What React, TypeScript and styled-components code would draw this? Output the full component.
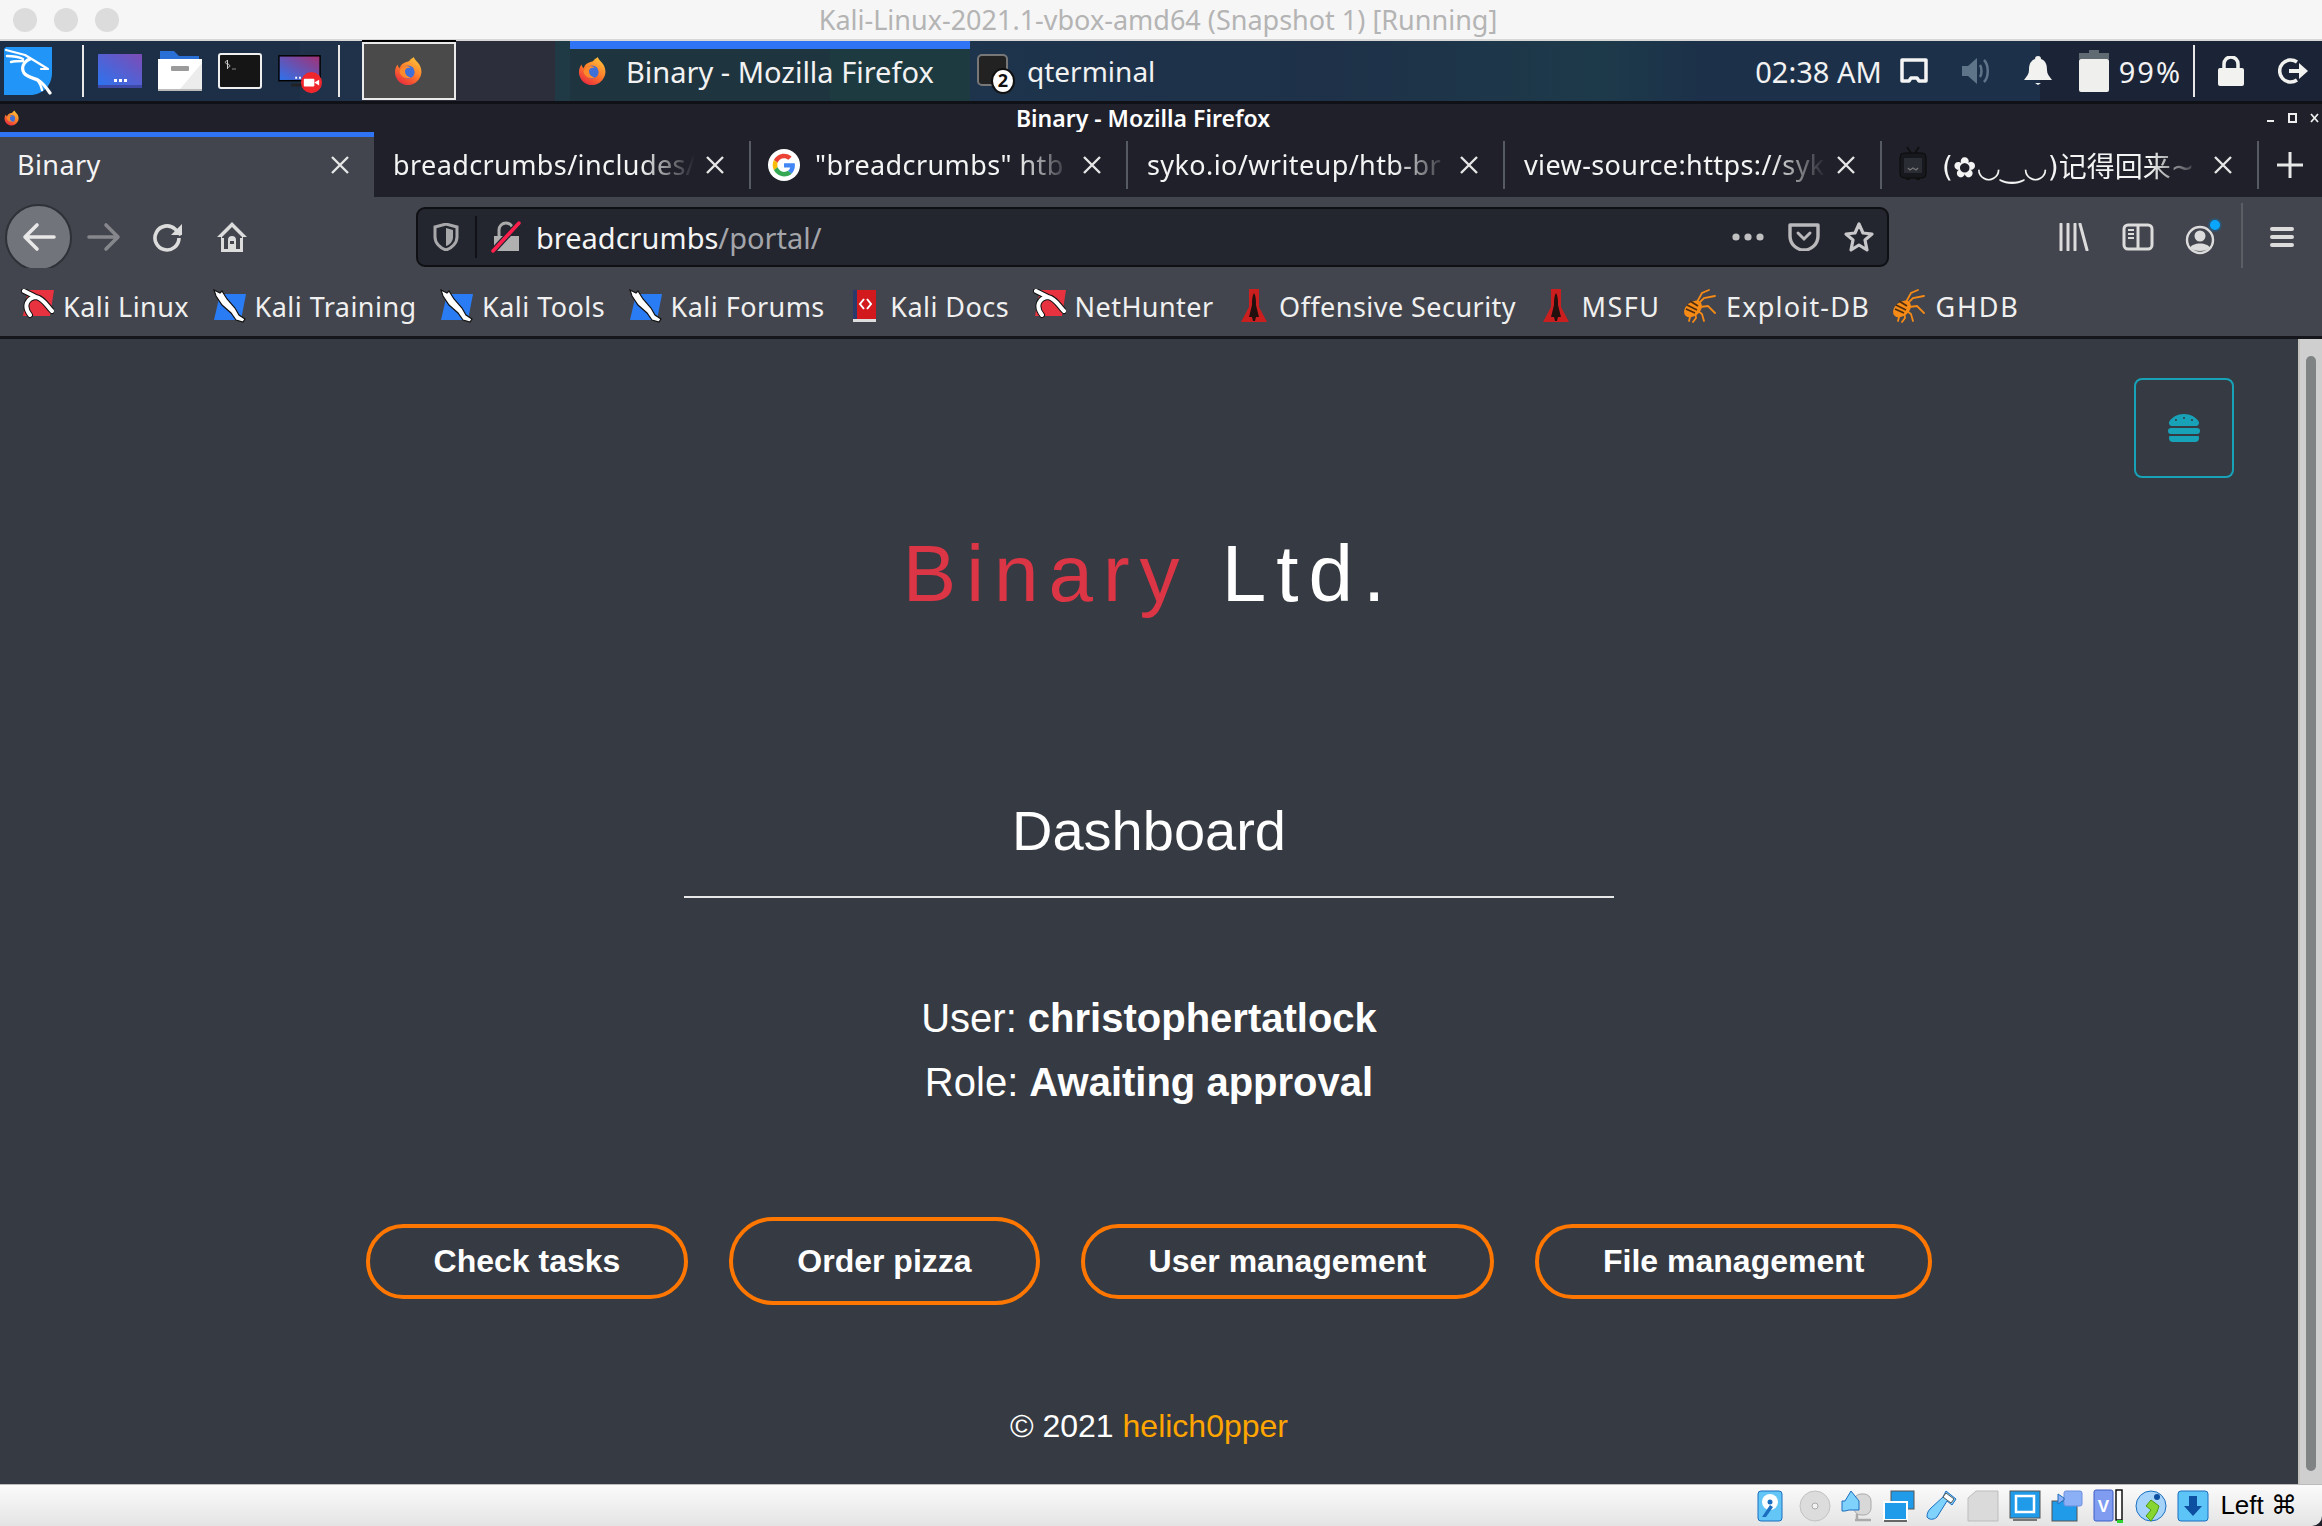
import React from 'react';
import styled, { createGlobalStyle } from 'styled-components';
import { FaHamburger } from 'react-icons/fa';

const UI_FONT = '"Noto Sans", "Noto Sans CJK SC", sans-serif';
const PAGE_FONT = '"Liberation Sans", Arial, sans-serif';

const GlobalStyle = createGlobalStyle`
  html, body {
    margin: 0;
    padding: 0;
    background: #1f2029;
    overflow: hidden;
  }
  * { box-sizing: border-box; }
`;

const Screen = styled.div`
  width: 2322px;
  height: 1526px;
  display: flex;
  flex-direction: column;
  font-family: ${UI_FONT};
  overflow: hidden;
`;

/* ---- host window title ---- */
const HostBar = styled.div`
  height: 41px;
  flex: none;
  display: flex;
  align-items: center;
  padding-left: 13px;
  background: #f6f6f6;
  border-bottom: 2px solid #d8d8d8;
`;
const Light = styled.span`
  width: 24px;
  height: 24px;
  border-radius: 50%;
  background: #dcdcdc;
  margin-right: 17px;
`;
const HostTitle = styled.div`
  flex: 1;
  text-align: center;
  font-size: 27px;
  color: #b4b4b4;
  margin-left: -142px;
  white-space: nowrap;
`;

/* ---- kali panel ---- */
const Panel = styled.div`
  height: 60px;
  flex: none;
  display: flex;
  align-items: center;
  color: #f2f2f2;
  background: linear-gradient(90deg, #1d2e47 0, #1d2e47 300px, #20324a 300px, #20324a 362px, #2c2f3b 362px, #2c2f3b 555px,
    #1f3a44 555px, #1f3a44 570px, #1e343f 570px, #1e343f 830px, #1d3a41 830px, #1d3a41 970px, #1d344c 970px,
    #1e3148 1330px, #1d3a4a 1600px, #1c3149 1700px, #1c3149 2040px, #1a2436 2040px, #1a2436 2322px);
`;
const PanelSep = styled.span<{ $ml: number }>`
  width: 2px;
  height: 52px;
  flex: none;
  margin-left: ${p => p.$ml}px;
  background: #e8e8e8;
`;
const Launcher = styled.div<{ $ml: number; $pt: number; $w?: number }>`
  width: ${p => p.$w || 44}px;
  height: 60px;
  flex: none;
  margin-left: ${p => p.$ml}px;
  padding-top: ${p => p.$pt}px;
  display: flex;
  align-items: flex-start;
`;
const ActiveLauncher = styled.div`
  width: 94px;
  height: 58px;
  flex: none;
  margin-left: 22px;
  display: flex;
  align-items: center;
  justify-content: center;
  background: #4a4a4a;
  border: 2px solid #eaeaea;
  box-shadow: 0 -2px 0 #000;
`;
const TaskActive = styled.div`
  width: 400px;
  height: 60px;
  flex: none;
  margin-left: 114px;
  display: flex;
  align-items: center;
  padding: 0 0 8px 8px;
  gap: 18px;
  border-top: 8px solid #2f74f5;
  font-size: 29px;
  white-space: nowrap;
`;
const Task = styled.div`
  display: flex;
  align-items: center;
  gap: 18px;
  margin-left: 7px;
  font-size: 28px;
  white-space: nowrap;
`;
const TaskIcon = styled.span`
  position: relative;
  width: 32px;
  height: 34px;
  display: block;
`;
const TaskBadge = styled.span`
  position: absolute;
  right: -6px;
  bottom: -6px;
  width: 24px;
  height: 26px;
  border-radius: 50%;
  border: 2px solid #111;
  background: #fff;
  color: #111;
  font-size: 18px;
  font-weight: 700;
  line-height: 21px;
  text-align: center;
`;
const Clock = styled.div`
  margin-left: auto;
  font-size: 29px;
  white-space: nowrap;
`;
const Tray = styled.div<{ $ml: number; $w: number }>`
  margin-left: ${p => p.$ml}px;
  width: ${p => p.$w}px;
  flex: none;
  display: flex;
  align-items: center;
  justify-content: center;
`;
const Percent = styled.div`
  margin-left: 10px;
  font-size: 29px;
  letter-spacing: 2px;
  white-space: nowrap;
`;

/* ---- firefox window ---- */
const WinTitle = styled.div`
  height: 31px;
  flex: none;
  display: flex;
  align-items: center;
  background: #1f2029;
  border-top: 3px solid #101116;
  padding-left: 4px;
`;
const WinTitleText = styled.div`
  flex: 1;
  text-align: center;
  font-size: 23px;
  font-weight: 600;
  color: #fff;
  white-space: nowrap;
`;
const WinControls = styled.div`
  display: flex;
  align-items: center;
  gap: 13px;
  padding-right: 3px;
`;

const TabStrip = styled.div`
  height: 65px;
  flex: none;
  display: flex;
  align-items: center;
  background: #1f2029;
`;
const Tab = styled.div<{ $active?: boolean; $w: number }>`
  width: ${p => p.$w}px;
  height: 65px;
  flex: none;
  display: flex;
  align-items: center;
  gap: 4px;
  padding: ${p => (p.$active ? '0 24px 5px 17px' : '0 24px 0 19px')};
  font-size: 27px;
  letter-spacing: 0.4px;
  color: #f4f4f4;
  white-space: nowrap;
  background: ${p => (p.$active ? '#42454d' : 'transparent')};
  border-top: ${p => (p.$active ? '5px solid #2f74f5' : '0')};
`;
const TabIcon = styled.span`
  flex: none;
  display: flex;
  margin-left: -2px;
  margin-right: 11px;
`;
const TabLabel = styled.span<{ $fade?: boolean; $kaomoji?: boolean }>`
  flex: 1;
  overflow: hidden;
  ${p => p.$fade && `
    -webkit-mask-image: linear-gradient(90deg, #000 calc(100% - 60px), transparent calc(100% - 6px));
    mask-image: linear-gradient(90deg, #000 calc(100% - 60px), transparent calc(100% - 6px));
  `}
  ${p => p.$kaomoji && `
    font-family: "DejaVu Sans", "Noto Sans CJK SC", sans-serif;
    font-size: 28px;
    letter-spacing: 0;
  `}
`;
const TabSep = styled.span`
  width: 2px;
  height: 48px;
  flex: none;
  background: #565a62;
`;
const PlusTab = styled.div`
  flex: 1;
  display: flex;
  justify-content: center;
  padding-right: 2px;
`;

const Toolbar = styled.div`
  height: 71px;
  flex: none;
  display: flex;
  align-items: center;
  background: #42454d;
  padding: 9px 0 0 5px;
`;
const NavButton = styled.div<{ $hover?: boolean }>`
  width: ${p => (p.$hover ? 67 : 64)}px;
  height: 67px;
  flex: none;
  display: flex;
  align-items: center;
  justify-content: center;
  border-radius: 50%;
  background: ${p => (p.$hover ? '#71747a' : 'transparent')};
  border: ${p => (p.$hover ? '2px solid #2f3138' : '0')};
`;
const UrlBar = styled.div`
  width: 1473px;
  height: 60px;
  flex: none;
  margin-left: 152px;
  display: flex;
  align-items: center;
  background: #23252f;
  border: 2px solid #0f1014;
  border-radius: 9px;
  padding-left: 15px;
  font-size: 29px;
`;
const UrlDivider = styled.span`
  width: 2px;
  height: 42px;
  background: #101116;
  margin: 0 14px 0 16px;
`;
const UrlHost = styled.span`
  color: #f4f4f4;
  margin-left: 15px;
`;
const UrlPath = styled.span`
  color: #a3a5aa;
`;
const UrlActions = styled.div`
  margin-left: auto;
  display: flex;
  align-items: center;
  gap: 23px;
  padding-right: 12px;
`;
const ToolSep = styled.span`
  width: 2px;
  height: 68px;
  background: #5b5e65;
  margin: 0 7px;
`;
const ToolIcons = styled.div`
  margin-left: 153px;
  display: flex;
  align-items: center;
`;

const Bookmarks = styled.div`
  height: 71px;
  flex: none;
  display: flex;
  align-items: center;
  background: #42454d;
  border-bottom: 3px solid #15161b;
  padding: 8px 0 0 21px;
`;
const Bookmark = styled.div<{ $tracking?: number }>`
  display: flex;
  align-items: center;
  gap: 9px;
  margin-right: 23.5px;
  font-size: 27px;
  letter-spacing: ${p => p.$tracking ?? 0.45}px;
  color: #f0f0f0;
  white-space: nowrap;
`;
const BookIcon = styled.span`
  width: 33px;
  height: 34px;
  flex: none;
  display: flex;
  justify-content: center;
`;

/* ---- page ---- */
const Viewport = styled.div`
  flex: 1;
  min-height: 0;
  display: flex;
  background: #363a42;
`;
const Page = styled.main`
  flex: 1;
  position: relative;
  display: flex;
  flex-direction: column;
  align-items: center;
  padding-top: 187px;
  font-family: ${PAGE_FONT};
  color: #fff;
`;
const BurgerButton = styled.div`
  position: absolute;
  top: 39px;
  right: 64px;
  width: 100px;
  height: 100px;
  display: flex;
  align-items: center;
  justify-content: center;
  border: 2px solid #17a2b8;
  border-radius: 8px;
  color: #17a2b8;
  font-size: 32px;
`;
const Brand = styled.h1`
  margin: 0;
  font-size: 80px;
  line-height: 96px;
  font-weight: 400;
  letter-spacing: 10px;
  white-space: nowrap;
  color: #fff;
`;
const BrandRed = styled.span`
  color: #dc3545;
`;
const Heading = styled.h2`
  margin: 175px 0 0;
  font-size: 56px;
  line-height: 67px;
  font-weight: 400;
`;
const Rule = styled.hr`
  width: 930px;
  height: 2px;
  margin: 32px 0 0;
  border: 0;
  background: #e8e8e8;
`;
const InfoBlock = styled.div`
  margin-top: 88px;
  text-align: center;
  font-size: 40px;
  line-height: 64px;
`;
const ButtonRow = styled.div`
  margin-top: 103px;
  display: flex;
  align-items: center;
  gap: 41px;
`;
const PillButton = styled.div<{ $tall?: boolean }>`
  height: ${p => (p.$tall ? 88 : 75)}px;
  padding: 0 64px;
  display: flex;
  align-items: center;
  border: 4px solid #ff7700;
  border-radius: 50px;
  font-size: 32px;
  font-weight: 700;
  white-space: nowrap;
`;
const Footer = styled.footer`
  margin-top: 97px;
  font-size: 32px;
  line-height: 48px;
`;
const FooterLink = styled.span`
  color: #ffa500;
`;
const ScrollTrack = styled.div`
  width: 24px;
  flex: none;
  padding: 17px 6px 0;
  background: #cfcfcf;
  border-left: 2px solid #c4c2bc;
`;
const ScrollThumb = styled.div`
  height: 1115px;
  border-radius: 6px;
  background: #7f8384;
`;

/* ---- virtualbox status ---- */
const StatusBar = styled.div`
  height: 42px;
  flex: none;
  display: flex;
  align-items: center;
  justify-content: flex-end;
  gap: 10px;
  padding-right: 25px;
  background: linear-gradient(#fbfbfb, #e4e4e4);
  border-top: 1px solid #bbb;
  border-bottom-right-radius: 10px;
`;
const StatusCell = styled.span`
  width: 32px;
  height: 34px;
  flex: none;
  display: flex;
  align-items: center;
`;
const StatusKey = styled.span`
  font-family: "Liberation Sans", "DejaVu Sans", sans-serif;
  font-size: 26px;
  color: #000;
  margin-left: 1px;
  white-space: nowrap;
`;

/* ---- drawings ---- */
const Firefox: React.FC<{ size: number }> = ({ size }) => (
  <svg width={size} height={size} viewBox="0 0 32 32">
    <defs>
      <linearGradient id="ffx" x1="0.8" y1="0" x2="0.2" y2="1">
        <stop offset="0" stopColor="#ffc53a" />
        <stop offset="0.5" stopColor="#ff7a2a" />
        <stop offset="1" stopColor="#e8263f" />
      </linearGradient>
    </defs>
    <path d="M21 1c1 3 4 5 6 8 3 5 3 11 0 15-3 5-8 7-12 7C8 31 2 26 1 18c0-4 1-7 3-9 0 2 1 3 2 4 1-4 4-6 8-7 2 0 3-1 4-3 1 0 2-1 3-2z" fill="url(#ffx)" />
    <circle cx="15" cy="17" r="7" fill="#3f6fd8" />
    <path d="M8 13c3-3 8-3 10 0-3-1-5 0-6 2-1 3 1 7 6 8-5 2-11-1-12-6 0-2 1-3 2-4z" fill="#ff8a2c" />
  </svg>
);

const KaliLogo = () => (
  <svg width="48" height="48" viewBox="0 0 48 48">
    <path d="M2 0h46v26c0 12-9 22-22 22H0V2z" fill="#2196f8" />
    <g fill="none" stroke="#fff" strokeLinecap="round" strokeLinejoin="round">
      <path d="M2 3l19 5 10 6 13 8-7 0" strokeWidth="2.200" />
      <path d="M3 9c6 0 12 1 16 3M7 15c4-1 9-1 12-1" strokeWidth="2.400" />
      <path d="M26 12c-7 3-9 9-6 14 3 4 9 5 14 7 5 3 8 7 12 13" strokeWidth="3.200" />
      <path d="M33 33c3 3 4 6 5 10" strokeWidth="2.400" />
    </g>
  </svg>
);

const AppsIcon = () => (
  <svg width="44" height="34" viewBox="0 0 44 34">
    <defs>
      <linearGradient id="apps" x1="0" y1="1" x2="1" y2="0">
        <stop offset="0" stopColor="#2b74ef" />
        <stop offset="1" stopColor="#7d4cb6" />
      </linearGradient>
    </defs>
    <rect width="44" height="32" rx="1" fill="url(#apps)" />
    <rect y="31" width="44" height="3" fill="#3d49a4" />
    <path d="M16 25h3v3h-3zM21 25h3v3h-3zM26 25h3v3h-3z" fill="#fff" />
  </svg>
);

const FolderIcon = () => (
  <svg width="44" height="40" viewBox="0 0 44 40">
    <path d="M2 0h14l5 5h20v10H2z" fill="#2a6fd6" />
    <path d="M0 8h44v30H0z" fill="#fff" />
    <path d="M22 38L44 12v26z" fill="#ececec" />
    <rect x="13" y="15" width="18" height="5" rx="1" fill="#9b9b9b" />
    <rect y="38" width="44" height="2" fill="#bbb" />
  </svg>
);

const TerminalIcon = () => (
  <svg width="44" height="36" viewBox="0 0 44 36">
    <rect x="1" y="1" width="42" height="34" rx="2" fill="#151515" stroke="#f0f0f0" strokeWidth="2" />
    <path d="M10 8c-3-1-4 3 0 3 3 1 2 4-1 3M9.500 7v9" stroke="#ccc" strokeWidth="1" fill="none" />
    <path d="M14 16h4" stroke="#888" strokeWidth="1" />
  </svg>
);

const RecorderIcon = () => (
  <svg width="46" height="40" viewBox="0 0 46 40">
    <defs>
      <linearGradient id="rec" x1="0" y1="1" x2="1" y2="0">
        <stop offset="0" stopColor="#2b74ef" />
        <stop offset="1" stopColor="#a53073" />
      </linearGradient>
    </defs>
    <rect x="1" y="1" width="43" height="26" fill="url(#rec)" stroke="#000" strokeWidth="1.500" />
    <rect x="14" y="30" width="14" height="3" fill="#222" />
    <path d="M18 23h2v2h-2zM22 23h2v2h-2z" fill="#fff" />
    <circle cx="35" cy="29" r="11" fill="#f0262d" />
    <rect x="27" y="25" width="11" height="8" rx="1" fill="#fff" />
    <path d="M38 29l5-3v6z" fill="#fff" />
  </svg>
);

const TermTask = () => (
  <svg width="32" height="34" viewBox="0 0 32 34">
    <rect x="1" y="1" width="29" height="30" rx="4" fill="#222" stroke="#777" strokeWidth="2" />
  </svg>
);

const MonitorTray = () => (
  <svg width="28" height="26" viewBox="0 0 28 26">
    <path d="M2 2h24v21H19l-2-3h-6l-2 3H2z" fill="none" stroke="#f4f4f4" strokeWidth="3.500" strokeLinejoin="round" />
  </svg>
);
const SpeakerTray = () => (
  <svg width="30" height="28" viewBox="0 0 30 28">
    <path d="M0 9h6l9-8v26l-9-8H0z" fill="#5e7488" />
    <path d="M18 8c2 3 2 9 0 12M22 3c5 5 5 17 0 22" stroke="#5e7488" strokeWidth="2.500" fill="none" />
  </svg>
);
const BellTray = () => (
  <svg width="28" height="30" viewBox="0 0 28 30">
    <path d="M14 0c2 0 3 1 3 3 5 2 6 6 6 11 0 4 2 6 5 10H0c3-4 5-6 5-10 0-5 1-9 6-11 0-2 1-3 3-3z" fill="#f2f2f0" />
    <path d="M11 27h6l-3 2z" fill="#f2f2f0" />
  </svg>
);
const BatteryTray = () => (
  <svg width="30" height="42" viewBox="0 0 30 42">
    <path d="M10 0h10v3h10v6H0V3h10z" fill="#606a72" />
    <rect y="9" width="30" height="33" rx="2" fill="#efefed" />
  </svg>
);
const LockTray = () => (
  <svg width="26" height="30" viewBox="0 0 26 30">
    <path d="M6 12V8a7 7 0 0 1 14 0v4" fill="none" stroke="#f2f2f0" strokeWidth="3.500" />
    <rect y="12" width="26" height="18" rx="2" fill="#f2f2f0" />
  </svg>
);
const LogoutTray = () => (
  <svg width="30" height="26" viewBox="0 0 30 26">
    <path d="M19 4a11 11 0 1 0 0 18" fill="none" stroke="#f2f2f0" strokeWidth="3.500" />
    <path d="M11 11h10V5l9 8-9 8v-6H11z" fill="#f2f2f0" />
  </svg>
);

const CloseX: React.FC = () => (
  <svg width="20" height="20" viewBox="0 0 20 20" style={{ flex: 'none' }}>
    <path d="M2 2l16 16M18 2L2 18" stroke="#e6e6e6" strokeWidth="2.400" />
  </svg>
);

const GoogleG = () => (
  <svg width="32" height="32" viewBox="0 0 48 48">
    <circle cx="24" cy="24" r="24" fill="#fff" />
    <g transform="translate(7 7) scale(0.71)">
      <path fill="#EA4335" d="M24 9.500c3.540 0 6.710 1.220 9.210 3.600l6.850-6.850C35.900 2.380 30.470 0 24 0 14.620 0 6.510 5.380 2.560 13.220l7.980 6.190C12.430 13.720 17.740 9.500 24 9.500z" />
      <path fill="#4285F4" d="M46.980 24.550c0-1.570-.15-3.090-.38-4.550H24v9.020h12.940c-.58 2.960-2.260 5.480-4.780 7.180l7.730 6c4.510-4.180 7.090-10.360 7.090-17.650z" />
      <path fill="#FBBC05" d="M10.530 28.590c-.48-1.450-.76-2.990-.76-4.590s.27-3.140.76-4.590l-7.980-6.190C.92 16.460 0 20.120 0 24c0 3.880.92 7.540 2.560 10.780l7.970-6.190z" />
      <path fill="#34A853" d="M24 48c6.480 0 11.930-2.130 15.890-5.810l-7.730-6c-2.150 1.450-4.920 2.300-8.160 2.300-6.260 0-11.570-4.220-13.470-9.910l-7.980 6.190C6.510 42.620 14.620 48 24 48z" />
    </g>
  </svg>
);

const TvIcon = () => (
  <svg width="28" height="38" viewBox="0 0 28 38">
    <path d="M8 1l4 6M20 1l-4 6" stroke="#111" strokeWidth="2" />
    <rect x="1" y="7" width="26" height="25" rx="4" fill="#17181d" stroke="#0a0a0a" />
    <rect x="5" y="12" width="18" height="15" fill="#2b2d35" />
    <path d="M9 22l2 2 3-2 3 2 2-2" stroke="#777" fill="none" strokeWidth="1.300" />
    <path d="M7 33h4M17 33h4" stroke="#111" strokeWidth="2" />
  </svg>
);

const BackArrow = () => (
  <svg width="34" height="30" viewBox="0 0 34 30">
    <path d="M32 15H4M15 3L3 15l12 12" fill="none" stroke="#e8e8e8" strokeWidth="3.600" strokeLinecap="round" strokeLinejoin="round" />
  </svg>
);
const ForwardArrow = () => (
  <svg width="34" height="30" viewBox="0 0 34 30">
    <path d="M2 15h28M19 3l12 12-12 12" fill="none" stroke="#85878c" strokeWidth="3.600" strokeLinecap="round" strokeLinejoin="round" />
  </svg>
);
const Reload = () => (
  <svg width="32" height="32" viewBox="0 0 32 32">
    <path d="M27 17a12 12 0 1 1-4-9l6 6" fill="none" stroke="#dcdcdc" strokeWidth="3.600" />
    <path d="M30 3v11H19z" fill="#dcdcdc" />
  </svg>
);
const Home = () => (
  <svg width="32" height="32" viewBox="0 0 32 32">
    <path d="M16 1L1 16h4v15h22V16h4z" fill="#dcdcdc" />
    <path d="M16 6L6 16v1h2v11h4V19a4 4 0 0 1 8 0v9h4V17h2v-1z" fill="#42454d" />
    <rect x="14" y="20" width="4" height="3" fill="#42454d" />
  </svg>
);
const Shield = () => (
  <svg width="26" height="28" viewBox="0 0 26 28">
    <path d="M13 1l11 3v10c0 6-5 11-11 13C7 25 2 20 2 14V4z" fill="none" stroke="#a8a8ab" strokeWidth="3" />
    <path d="M13 5l7 2v7c0 4-3 8-7 9z" fill="#a8a8ab" />
  </svg>
);
const BrokenLock = () => (
  <svg width="30" height="32" viewBox="0 0 30 32">
    <path d="M8 15V9a7 7 0 0 1 14 0" fill="none" stroke="#aaa" strokeWidth="3" />
    <path d="M3 15h25v15H3z" fill="#b0b0b0" />
    <path d="M2 30L28 2" stroke="#23252f" strokeWidth="6" />
    <path d="M2 30L28 2" stroke="#ff1f4c" strokeWidth="3.500" strokeLinecap="round" />
  </svg>
);
const Dots = () => (
  <svg width="34" height="10" viewBox="0 0 34 10">
    <circle cx="5" cy="5" r="3.600" fill="#c0c0c2" />
    <circle cx="17" cy="5" r="3.600" fill="#c0c0c2" />
    <circle cx="29" cy="5" r="3.600" fill="#c0c0c2" />
  </svg>
);
const Pocket = () => (
  <svg width="32" height="28" viewBox="0 0 32 28">
    <path d="M2 2h28v11a14 14 0 0 1-28 0z" fill="none" stroke="#b9b9bb" strokeWidth="3.400" strokeLinejoin="round" />
    <path d="M10 10l6 6 6-6" fill="none" stroke="#b9b9bb" strokeWidth="3" strokeLinecap="round" />
  </svg>
);
const Star = () => (
  <svg width="32" height="32" viewBox="0 0 32 32">
    <path d="M16 3l4 9 9 1-7 6 2 10-8-5-8 5 2-10-7-6 9-1z" fill="none" stroke="#c8c8ca" strokeWidth="3.200" strokeLinejoin="round" />
  </svg>
);
const Library = () => (
  <svg width="30" height="28" viewBox="0 0 30 28">
    <path d="M2 1v26M9 1v26M16 1v26M21 1l7 26" stroke="#dcdcdc" strokeWidth="3" fill="none" strokeLinecap="round" />
  </svg>
);
const SidebarIcon = () => (
  <svg width="32" height="28" viewBox="0 0 32 28">
    <rect x="2" y="2" width="28" height="24" rx="4" fill="none" stroke="#dcdcdc" strokeWidth="3" />
    <path d="M16 2v24" stroke="#dcdcdc" strokeWidth="3" />
    <path d="M6 7h6M6 11h6M6 15h6" stroke="#dcdcdc" strokeWidth="2" />
  </svg>
);
const Account = () => (
  <svg width="42" height="40" viewBox="-2 0 42 40">
    <circle cx="17" cy="23" r="13" fill="none" stroke="#dcdcdc" strokeWidth="2.400" />
    <circle cx="17" cy="19" r="5.500" fill="#dcdcdc" />
    <path d="M7 31c2-6 18-6 20 0-5 4-15 4-20 0z" fill="#dcdcdc" />
    <circle cx="32" cy="8" r="6" fill="#0aa5ff" stroke="#2f5570" strokeWidth="2" />
  </svg>
);
const Menu = () => (
  <svg width="24" height="24" viewBox="0 0 24 24">
    <path d="M2 4h20M2 12h20M2 20h20" stroke="#dcdcdc" strokeWidth="4" strokeLinecap="round" />
  </svg>
);

const KaliBook: React.FC<{ red?: boolean }> = ({ red }) =>
  red ? (
    <svg width="33" height="30" viewBox="0 0 33 30">
      <path d="M7 1h26l-4 26H2z" fill="#e8323f" />
      <g fill="none" strokeLinecap="round" strokeLinejoin="round">
        <path d="M3 2l12 6C6 9 2 17 9 26M15 8c7 1 11 9 16 14" stroke="#111" strokeWidth="6" />
        <path d="M3 2l12 6C6 9 2 17 9 26M15 8c7 1 11 9 16 14" stroke="#fff" strokeWidth="4" />
      </g>
    </svg>
  ) : (
    <svg width="33" height="34" viewBox="0 0 33 34">
      <path d="M7 5h26l-5 26H1z" fill="#2a7cf5" />
      <path d="M1 1l6 3 2-2 5 8 8 9 4 7 6 4-2 3-7-2-5-7-9-8-6-9z" fill="#fff" stroke="#111" strokeWidth="1.200" />
    </svg>
  );

const DocsBook = () => (
  <svg width="25" height="34" viewBox="0 0 25 34">
    <rect x="1" y="1" width="23" height="31" fill="#d2191d" />
    <rect x="1" y="1" width="4" height="31" fill="#2a3a6a" />
    <rect x="1" y="30" width="23" height="3" fill="#ddd" />
    <path d="M12 10l-4 5 4 5M15 10l4 5-4 5" stroke="#fff" strokeWidth="2" fill="none" />
  </svg>
);
const Rocket = () => (
  <svg width="28" height="34" viewBox="0 0 28 34">
    <path d="M9 0h10v18l8 15H1L9 18z" fill="#cb1f1f" />
    <path d="M14 4c2 3 2 8 2 12l3 12h-3l-1 4h-2l-1-4H9l3-12c0-4 0-9 2-12z" fill="#22100f" />
  </svg>
);
const Spider = () => (
  <svg width="33" height="34" viewBox="0 0 33 34">
    <g fill="none" stroke="#f58a16" strokeWidth="1.800" strokeLinecap="round">
      <path d="M13 13l5-9 7-3M14 15l6-6 11-2M16 18l8-1 7 7M14 22l4 3 2 7M11 21l1 8-3 4M7 24l-2 8" />
    </g>
    <ellipse cx="9" cy="20" rx="10" ry="7" fill="#f58a16" transform="rotate(-40 9 20)" />
    <path d="M2 20l9 4M3 16l10 5M6 12l8 5" stroke="#4b2c10" strokeWidth="1.600" />
  </svg>
);

const StatusIcon: React.FC<{ kind: string }> = ({ kind }) => {
  const blue = '#1f9bea';
  const edge = '#1c6fc0';
  switch (kind) {
    case 'disk':
      return (
        <svg width="26" height="32" viewBox="0 0 26 32">
          <rect x="1" y="1" width="24" height="30" rx="3" fill="#63c6f7" stroke={edge} />
          <circle cx="13" cy="12" r="8" fill="#fff" />
          <circle cx="13" cy="12" r="2.500" fill={edge} />
          <path d="M5 27l8-12 3 2-7 10z" fill={edge} />
        </svg>
      );
    case 'cd':
      return (
        <svg width="32" height="32" viewBox="0 0 32 32">
          <circle cx="16" cy="16" r="15" fill="#dcdcdc" stroke="#c2c2c2" />
          <circle cx="16" cy="16" r="3" fill="#f2f2f2" stroke="#aaa" />
        </svg>
      );
    case 'audio':
      return (
        <svg width="32" height="32" viewBox="0 0 32 32">
          <rect x="13" y="4" width="17" height="21" rx="7" fill="#d8d8d8" stroke="#aaa" />
          <path d="M16 24v5M14 30h16" stroke="#aaa" strokeWidth="2.500" />
          <path d="M1 11h3l6-10 8 10v9H8L4 21H1z" fill="#7fd2fb" stroke={edge} />
        </svg>
      );
    case 'network':
      return (
        <svg width="32" height="32" viewBox="0 0 32 32">
          <rect x="8" y="1" width="23" height="18" fill={blue} stroke="#555" />
          <rect x="1" y="12" width="23" height="18" fill={blue} stroke="#fff" strokeWidth="2" />
          <rect x="1" y="30" width="23" height="2" fill="#666" />
        </svg>
      );
    case 'usb':
      return (
        <svg width="32" height="32" viewBox="0 0 32 32">
          <path d="M21 1l10 8-4 6-5-4-10 16c-3 3-8 3-10 0 0-4 1-6 4-9l12-11z" fill="#7fd2fb" stroke={edge} />
          <path d="M21 3l8 6-3 4-8-6z" fill="#fff" stroke="#555" />
        </svg>
      );
    case 'folder':
      return (
        <svg width="32" height="32" viewBox="0 0 32 32">
          <path d="M1 8l8-7h22v30H1z" fill="#dadada" stroke="#bdbdbd" />
        </svg>
      );
    case 'screen':
      return (
        <svg width="32" height="32" viewBox="0 0 32 32">
          <rect x="1" y="1" width="30" height="27" fill={blue} stroke="#555" />
          <rect x="7" y="6" width="18" height="16" fill="none" stroke="#fff" strokeWidth="2.500" />
          <rect x="4" y="29" width="24" height="2" fill="#777" />
        </svg>
      );
    case 'capture':
      return (
        <svg width="32" height="32" viewBox="0 0 32 32">
          <rect x="1" y="11" width="25" height="20" fill={blue} stroke="#555" />
          <rect x="13" y="1" width="18" height="15" rx="2" fill="#8cb0f5" stroke="#6d8fe0" />
          <path d="M13 8L7 4v10l6-4z" fill="#8cb0f5" stroke={edge} />
        </svg>
      );
    case 'cpu':
      return (
        <svg width="30" height="34" viewBox="0 0 30 34">
          <rect x="1" y="1" width="19" height="31" rx="2" fill="#7f9cf0" stroke="#3f5fc5" />
          <text x="10.500" y="23" fontFamily="Liberation Sans" fontWeight="700" fontSize="17" fill="#fff" textAnchor="middle">V</text>
          <rect x="23" y="1" width="6" height="30" fill="#fff" stroke="#000" strokeWidth="1.400" />
          <rect x="24" y="31" width="6" height="3" fill="#2dd22d" />
        </svg>
      );
    case 'globe':
      return (
        <svg width="32" height="32" viewBox="0 0 32 32">
          <circle cx="16" cy="16" r="15" fill="#a5d3fa" stroke={edge} />
          <path d="M16 10l8 6-2 6-6 9-5-5 5-6-5-4z" fill="#86d530" stroke="#4f9a12" />
          <circle cx="22" cy="7" r="3" fill="#0d4fa0" />
        </svg>
      );
    default:
      return (
        <svg width="32" height="32" viewBox="0 0 32 32">
          <rect x="1" y="1" width="30" height="30" rx="3" fill="#5cc4f7" stroke={edge} />
          <path d="M12 6h8v10h5L16 26 7 16h5z" fill="#0d4fa0" />
        </svg>
      );
  }
};

const tabs: { label: string; icon?: React.ReactNode; kaomoji?: boolean }[] = [
  { label: 'breadcrumbs/includes/' },
  { label: '"breadcrumbs" htb', icon: <GoogleG /> },
  { label: 'syko.io/writeup/htb-br' },
  { label: 'view-source:https://syk' },
  { label: '(✿◡‿◡)记得回来~', icon: <TvIcon />, kaomoji: true },
];

const bookmarks: { label: string; icon: React.ReactNode; tracking?: number }[] = [
  { label: 'Kali Linux', icon: <KaliBook red /> },
  { label: 'Kali Training', icon: <KaliBook /> },
  { label: 'Kali Tools', icon: <KaliBook /> },
  { label: 'Kali Forums', icon: <KaliBook /> },
  { label: 'Kali Docs', icon: <DocsBook /> },
  { label: 'NetHunter', icon: <KaliBook red /> },
  { label: 'Offensive Security', icon: <Rocket /> },
  { label: 'MSFU', icon: <Rocket />, tracking: 1.5 },
  { label: 'Exploit-DB', icon: <Spider />, tracking: 1.2 },
  { label: 'GHDB', icon: <Spider />, tracking: 1.8 },
];

const statusIcons = ['disk', 'cd', 'audio', 'network', 'usb', 'folder', 'screen', 'capture', 'cpu', 'globe', 'arrow'];

const App: React.FC = () => (
  <Screen>
    <GlobalStyle />
    <HostBar>
      <Light />
      <Light />
      <Light />
      <HostTitle>Kali-Linux-2021.1-vbox-amd64 (Snapshot 1) [Running]</HostTitle>
    </HostBar>

    <Panel>
      <Launcher $ml={4} $pt={6} $w={48}><KaliLogo /></Launcher>
      <PanelSep $ml={30} />
      <Launcher $ml={14} $pt={13}><AppsIcon /></Launcher>
      <Launcher $ml={16} $pt={10}><FolderIcon /></Launcher>
      <Launcher $ml={16} $pt={12}><TerminalIcon /></Launcher>
      <Launcher $ml={16} $pt={13}><RecorderIcon /></Launcher>
      <PanelSep $ml={16} />
      <ActiveLauncher><Firefox size={30} /></ActiveLauncher>
      <TaskActive>
        <Firefox size={30} />
        Binary - Mozilla Firefox
      </TaskActive>
      <Task>
        <TaskIcon>
          <TermTask />
          <TaskBadge>2</TaskBadge>
        </TaskIcon>
        qterminal
      </Task>
      <Clock>02:38 AM</Clock>
      <Tray $ml={18} $w={28}><MonitorTray /></Tray>
      <Tray $ml={34} $w={30}><SpeakerTray /></Tray>
      <Tray $ml={32} $w={28}><BellTray /></Tray>
      <Tray $ml={27} $w={30}><BatteryTray /></Tray>
      <Percent>99%</Percent>
      <PanelSep $ml={11} />
      <Tray $ml={23} $w={26}><LockTray /></Tray>
      <Tray $ml={34} $w={30}><LogoutTray /></Tray>
      <Tray $ml={0} $w={14} />
    </Panel>

    <WinTitle>
      <Firefox size={16} />
      <WinTitleText>Binary - Mozilla Firefox</WinTitleText>
      <WinControls>
        <svg width="9" height="10" viewBox="0 0 9 10"><path d="M1 8h7" stroke="#eee" strokeWidth="2" /></svg>
        <svg width="9" height="10" viewBox="0 0 9 10"><rect x="1" y="1" width="7" height="8" fill="none" stroke="#eee" strokeWidth="2" /></svg>
        <svg width="9" height="10" viewBox="0 0 9 10"><path d="M1 1l7 8M8 1L1 9" stroke="#eee" strokeWidth="1.800" /></svg>
      </WinControls>
    </WinTitle>

    <TabStrip>
      <Tab $active $w={374}>
        <TabLabel>Binary</TabLabel>
        <CloseX />
      </Tab>
      {tabs.map(t => (
        <React.Fragment key={t.label}>
          <Tab $w={375}>
            {t.icon && <TabIcon>{t.icon}</TabIcon>}
            <TabLabel $fade $kaomoji={t.kaomoji}>{t.label}</TabLabel>
            <CloseX />
          </Tab>
          <TabSep />
        </React.Fragment>
      ))}
      <PlusTab>
        <svg width="28" height="28" viewBox="0 0 28 28"><path d="M14 1v26M1 14h26" stroke="#e8e8e8" strokeWidth="3" /></svg>
      </PlusTab>
    </TabStrip>

    <Toolbar>
      <NavButton $hover><BackArrow /></NavButton>
      <NavButton><ForwardArrow /></NavButton>
      <NavButton><Reload /></NavButton>
      <NavButton><Home /></NavButton>
      <UrlBar>
        <Shield />
        <UrlDivider />
        <BrokenLock />
        <UrlHost>breadcrumbs</UrlHost>
        <UrlPath>/portal/</UrlPath>
        <UrlActions>
          <Dots />
          <Pocket />
          <Star />
        </UrlActions>
      </UrlBar>
      <ToolIcons>
        <NavButton><Library /></NavButton>
        <NavButton><SidebarIcon /></NavButton>
        <NavButton><Account /></NavButton>
        <ToolSep />
        <NavButton><Menu /></NavButton>
      </ToolIcons>
    </Toolbar>

    <Bookmarks>
      {bookmarks.map(b => (
        <Bookmark key={b.label} $tracking={b.tracking}>
          <BookIcon>{b.icon}</BookIcon>
          {b.label}
        </Bookmark>
      ))}
    </Bookmarks>

    <Viewport>
      <Page>
        <BurgerButton><FaHamburger /></BurgerButton>
        <Brand><BrandRed>Binary</BrandRed> Ltd.</Brand>
        <Heading>Dashboard</Heading>
        <Rule />
        <InfoBlock>
          <div>User: <strong>christophertatlock</strong></div>
          <div>Role: <strong>Awaiting approval</strong></div>
        </InfoBlock>
        <ButtonRow>
          <PillButton>Check tasks</PillButton>
          <PillButton $tall>Order pizza</PillButton>
          <PillButton>User management</PillButton>
          <PillButton>File management</PillButton>
        </ButtonRow>
        <Footer>© 2021 <FooterLink>helich0pper</FooterLink></Footer>
      </Page>
      <ScrollTrack><ScrollThumb /></ScrollTrack>
    </Viewport>

    <StatusBar>
      {statusIcons.map(k => <StatusCell key={k}><StatusIcon kind={k} /></StatusCell>)}
      <StatusKey>Left ⌘</StatusKey>
    </StatusBar>
  </Screen>
);

export default App;
